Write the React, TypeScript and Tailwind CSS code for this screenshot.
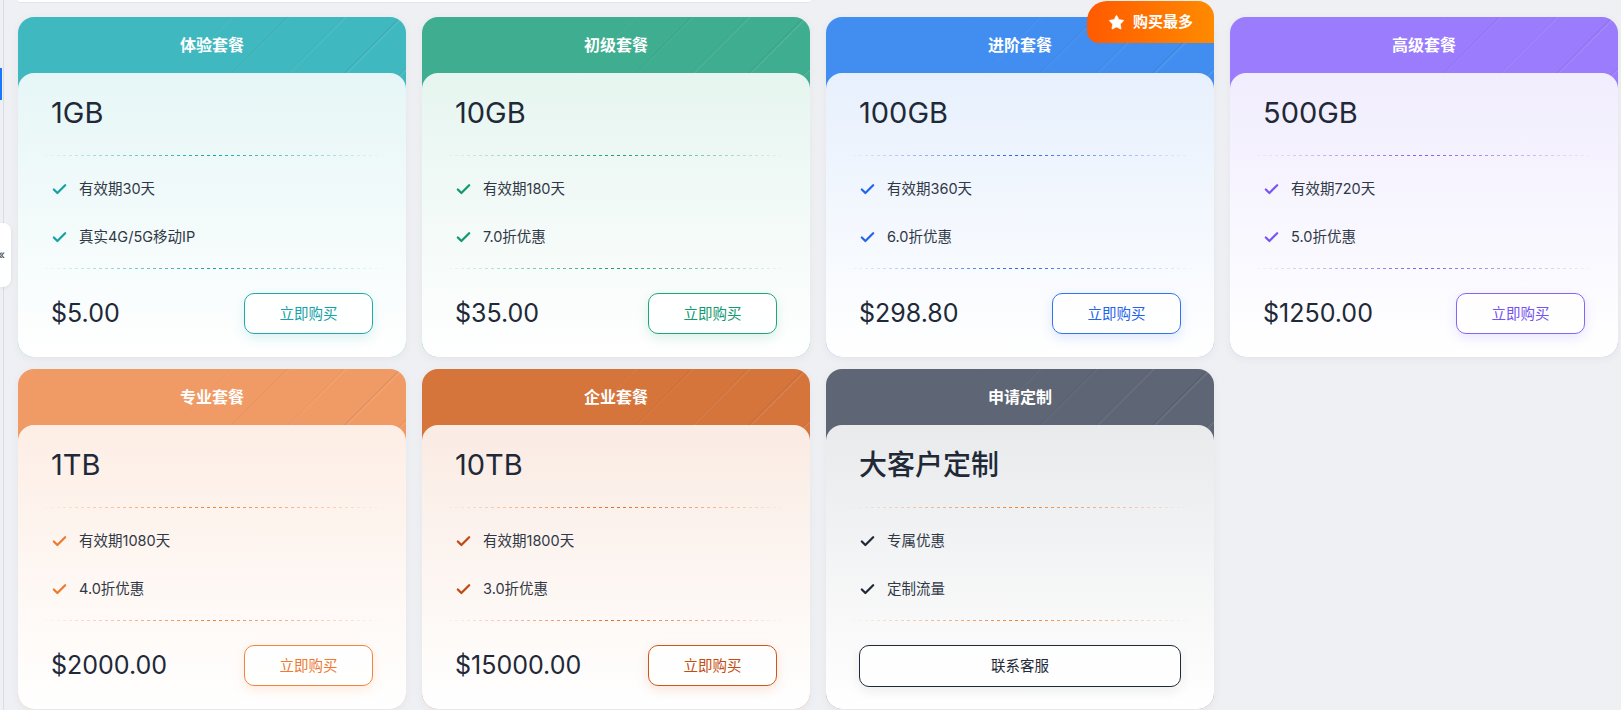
import { Check, Star } from "lucide-react";

type Plan = {
  name: string;
  size: string;
  features: string[];
  price?: string;
  action: string;
  header: string;
  body: string;
  check: string;
  divider: string;
  button: string;
  badge?: boolean;
  big?: boolean;
};

const plans: Plan[] = [
  {
    name: "体验套餐",
    size: "1GB",
    features: ["有效期30天", "真实4G/5G移动IP"],
    price: "$5.00",
    action: "立即购买",
    header: "bg-[#40b8bf]",
    body: "bg-[linear-gradient(180deg,#e6f6f6_0%,#ffffff_100%)]",
    check: "text-[#11a3a6]",
    divider: "bg-[repeating-linear-gradient(90deg,#14a3a6_0_3px,transparent_3px_6px)]",
    button: "border-[#20a9ad] text-[#16a2a6] shadow-[0_4px_12px_rgba(20,163,166,0.15)]",
  },
  {
    name: "初级套餐",
    size: "10GB",
    features: ["有效期180天", "7.0折优惠"],
    price: "$35.00",
    action: "立即购买",
    header: "bg-[#3fae90]",
    body: "bg-[linear-gradient(180deg,#e6f5ef_0%,#ffffff_100%)]",
    check: "text-[#0f9a6c]",
    divider: "bg-[repeating-linear-gradient(90deg,#10a070_0_3px,transparent_3px_6px)]",
    button: "border-[#1fa47c] text-[#139a6f] shadow-[0_4px_12px_rgba(16,160,112,0.15)]",
  },
  {
    name: "进阶套餐",
    size: "100GB",
    features: ["有效期360天", "6.0折优惠"],
    price: "$298.80",
    action: "立即购买",
    header: "bg-[#428ef0]",
    body: "bg-[linear-gradient(180deg,#e7f0fd_0%,#ffffff_100%)]",
    check: "text-[#2366e8]",
    divider: "bg-[repeating-linear-gradient(90deg,#2563eb_0_3px,transparent_3px_6px)]",
    button: "border-[#3273f0] text-[#2563eb] shadow-[0_4px_12px_rgba(37,99,235,0.15)]",
    badge: true,
  },
  {
    name: "高级套餐",
    size: "500GB",
    features: ["有效期720天", "5.0折优惠"],
    price: "$1250.00",
    action: "立即购买",
    header: "bg-[#9a7cfd]",
    body: "bg-[linear-gradient(180deg,#f1edfe_0%,#ffffff_100%)]",
    check: "text-[#7b55f2]",
    divider: "bg-[repeating-linear-gradient(90deg,#7c5cf5_0_3px,transparent_3px_6px)]",
    button: "border-[#8465f6] text-[#7453f0] shadow-[0_4px_12px_rgba(124,92,245,0.15)]",
  },
  {
    name: "专业套餐",
    size: "1TB",
    features: ["有效期1080天", "4.0折优惠"],
    price: "$2000.00",
    action: "立即购买",
    header: "bg-[#f09a66]",
    body: "bg-[linear-gradient(180deg,#fdeee5_0%,#ffffff_100%)]",
    check: "text-[#f0782e]",
    divider: "bg-[repeating-linear-gradient(90deg,#f3802f_0_3px,transparent_3px_6px)]",
    button: "border-[#f3843e] text-[#ee7a33] shadow-[0_4px_12px_rgba(243,128,47,0.15)]",
  },
  {
    name: "企业套餐",
    size: "10TB",
    features: ["有效期1800天", "3.0折优惠"],
    price: "$15000.00",
    action: "立即购买",
    header: "bg-[#d5753c]",
    body: "bg-[linear-gradient(180deg,#faebe3_0%,#ffffff_100%)]",
    check: "text-[#c4470f]",
    divider: "bg-[repeating-linear-gradient(90deg,#ea6a20_0_3px,transparent_3px_6px)]",
    button: "border-[#cf5616] text-[#c44d10] shadow-[0_4px_12px_rgba(207,86,22,0.15)]",
  },
  {
    name: "申请定制",
    size: "大客户定制",
    features: ["专属优惠", "定制流量"],
    action: "联系客服",
    header: "bg-[#5e6574]",
    body: "bg-[linear-gradient(180deg,#e9eaec_0%,#ffffff_100%)]",
    check: "text-[#1f2937]",
    divider: "bg-[repeating-linear-gradient(90deg,#f3802f_0_3px,transparent_3px_6px)]",
    button: "border-[#1f2937] text-[#1f2937] shadow-[0_4px_12px_rgba(31,41,55,0.08)]",
    big: true,
  },
];

const Divider = ({ color }: { color: string }) => (
  <div
    className={`-mx-3 h-px ${color} [mask-image:linear-gradient(90deg,transparent,black_50%,transparent)]`}
  />
);

const PlanCard = ({ plan }: { plan: Plan }) => (
  <div className="relative h-[340px] rounded-2xl shadow-[0_2px_10px_rgba(15,23,42,0.05)]">
    {plan.badge && (
      <div className="absolute -top-[16px] right-0 z-10 flex h-[42px] w-[127px] items-center justify-center gap-2 rounded-tl-[20px] rounded-tr-[16px] rounded-bl-[12px] bg-[linear-gradient(90deg,#ff5a00,#ff8a00)] text-[15px] font-bold text-white">
        <Star size={17} fill="white" strokeWidth={1} />
        <span>购买最多</span>
      </div>
    )}
    <div className={`flex h-full flex-col overflow-hidden rounded-2xl ${plan.header}`}>
      <div className="relative h-[72px] shrink-0">
        <div className="absolute inset-0 bg-[repeating-linear-gradient(135deg,transparent_0_30px,rgba(0,0,0,0.06)_30px_31px,rgba(255,255,255,0.07)_31px_33px,transparent_33px_40px)] [mask-image:linear-gradient(90deg,transparent_35%,black_100%)]" />
        <div className="relative flex h-14 items-center justify-center text-[16px] font-bold text-white">
          {plan.name}
        </div>
      </div>
      <div className={`relative -mt-4 flex flex-1 flex-col rounded-t-2xl px-[33px] ${plan.body}`}>
        <div
          className={`pt-[22px] leading-[36px] text-[#1f2937] ${
            plan.big ? "text-[28px] font-medium" : "text-[29px] font-normal"
          }`}
        >
          {plan.size}
        </div>
        <div className="mt-[24px]">
          <Divider color={plan.divider} />
        </div>
        <div className="mt-[23px] flex flex-col gap-[28px]">
          {plan.features.map((f) => (
            <div key={f} className="flex h-5 items-center gap-[11px] text-[14.5px] text-[#303846]">
              <Check size={17} strokeWidth={3.2} className={plan.check} />
              <span>{f}</span>
            </div>
          ))}
        </div>
        <div className="mt-[21px]">
          <Divider color={plan.divider} />
        </div>
        <div className="mt-[24px] flex items-center justify-between">
          {plan.price ? (
            <>
              <span className="text-[25px] font-normal text-[#1f2937]">{plan.price}</span>
              <button
                className={`h-[41px] w-[129px] rounded-[10px] border bg-white/70 text-[14.5px] ${plan.button}`}
              >
                {plan.action}
              </button>
            </>
          ) : (
            <button
              className={`h-[42px] w-full rounded-[10px] border bg-white/70 text-[14.5px] ${plan.button}`}
            >
              {plan.action}
            </button>
          )}
        </div>
      </div>
    </div>
  </div>
);

export default function App() {
  return (
    <div className="relative h-[710px] w-[1621px] overflow-hidden bg-[#eff0f4] font-['Inter','Noto_Sans_CJK_SC',sans-serif]">
      {/* sidebar edge */}
      <div className="absolute left-[3px] top-0 h-full w-px bg-[#d9dce4]" />
      <div className="absolute left-0 top-[68px] h-[32px] w-[2px] bg-[#1677ff]" />
      <div className="absolute left-0 top-[223px] z-10 flex h-[64px] w-[11px] items-center rounded-r-lg bg-white text-[12px] text-[#333] shadow-[0_1px_4px_rgba(0,0,0,0.08)]">
        <span className="-ml-[2px]">«</span>
      </div>

      <div className="ml-[18px] h-[3px] w-[793px] rounded-b-lg border-b border-[#e3e5ea] bg-white" />

      <div className="mt-[14px] ml-[18px] grid w-[1600px] grid-cols-4 gap-x-4 gap-y-3">
        {plans.map((p) => (
          <PlanCard key={p.name} plan={p} />
        ))}
      </div>
    </div>
  );
}
